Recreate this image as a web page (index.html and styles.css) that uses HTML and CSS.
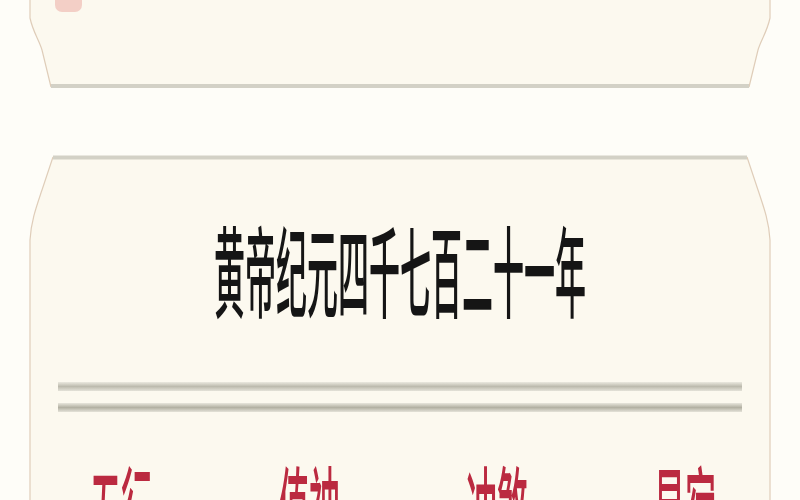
FILE: index.html
```html
<!DOCTYPE html>
<html lang="zh">
<head>
<meta charset="utf-8">
<title>黄历</title>
<link rel="stylesheet" href="styles.css">
</head>
<body>
<main class="page">
  <section class="card card-top">
    <svg class="card-bg" width="742" height="128" viewBox="0 0 742 128">
      <path class="fill" d="M1 0 L1 58 C4 72 10 80 13 90 L22 127 L720 127 L729 90 C732 80 738 72 741 58 L741 0 Z"/>
      <path class="side" d="M1 0 L1 58 C4 72 10 80 13 90 L22 127"/>
      <path class="side" d="M741 0 L741 58 C738 72 732 80 729 90 L720 127"/>
      <line class="edge" x1="22" y1="126" x2="720" y2="126"/>
    </svg>
    <div class="top-row">
      <span class="top-icon"></span>
      <span class="top-text">宜 祭祀 祈福 求嗣 开光 出行</span>
    </div>
  </section>

  <section class="card card-main">
    <svg class="card-bg" width="742" height="440" viewBox="0 0 742 440">
      <path class="fill" d="M24 2 L718 2 L729 35 C734 50 740 66 741 85 L741 440 L1 440 L1 85 C2 66 8 50 13 35 Z"/>
      <path class="side" d="M24 2 L13 35 C8 50 2 66 1 85 L1 440"/>
      <path class="side" d="M718 2 L729 35 C734 50 740 66 741 85 L741 440"/>
      <line class="edge" x1="24" y1="2.5" x2="718" y2="2.5"/>
    </svg>
    <h1 class="title"><span class="stretch">黄帝纪元四千七百二十一年</span></h1>
    <div class="rules"></div>
    <ul class="labels">
      <li><span class="stretch">五行</span></li>
      <li><span class="stretch">值神</span></li>
      <li><span class="stretch">冲煞</span></li>
      <li><span class="stretch">星宿</span></li>
    </ul>
  </section>
</main>
</body>
</html>
```
FILE: styles.css
```css
html, body {
  margin: 0;
  padding: 0;
  background: #fefdf8;
  overflow: hidden;
  height: 500px;
}
body {
  font-family: "Noto Sans CJK SC", "Noto Sans", sans-serif;
}
.page {
  display: flex;
  flex-direction: column;
  gap: 27px;
  padding-left: 29px;
}
.card {
  position: relative;
  width: 742px;
  box-sizing: border-box;
  flex-shrink: 0;
}
.card-bg {
  position: absolute;
  left: 0;
  top: 0;
  z-index: 0;
}
.card-bg .fill { fill: #fcf9ef; stroke: none; }
.card-bg .side { fill: none; stroke: #dfcdb9; stroke-width: 1.2; }
.card-bg .edge { stroke: #d3d1c6; stroke-width: 4; }

.card-top {
  height: 128px;
  margin-top: -40px;
}
.top-row {
  position: relative;
  display: flex;
  align-items: flex-end;
  gap: 16px;
  padding: 20px 0 0 26px;
  height: 32px;
}
.top-icon {
  width: 27px;
  height: 32px;
  border-radius: 4px 4px 7px 7px;
  background: #f3cfc6;
}
.top-text {
  font-size: 20px;
  line-height: 20px;
  color: #f3f0e7;
  letter-spacing: 8px;
  margin-bottom: 12px;
}

.card-main {
  height: 440px;
  margin-top: 40px;
  display: flex;
  flex-direction: column;
}
.card-main > * {
  flex-shrink: 0;
}
.title {
  position: relative;
  margin: 61px 0 0 0;
  height: 100px;
  display: flex;
  align-items: center;
  justify-content: center;
  font-size: 31px;
  font-weight: 500;
  line-height: 31px;
  color: #151515;
}
.stretch {
  display: inline-block;
  transform: scaleY(3.2);
  transform-origin: center;
}
.rules {
  position: relative;
  margin: 66px 29px 0 29px;
  height: 30px;
  background:
    linear-gradient(#ebe9df, #bdbbae 50%, #e4e2d8) top / 100% 9px no-repeat,
    linear-gradient(#e8e6dc, #b3b1a3 50%, #e4e2d8) bottom / 100% 9px no-repeat;
}
.labels {
  position: relative;
  list-style: none;
  margin: 44px 0 0 0;
  padding: 0 0 0 61px;
  display: grid;
  grid-template-columns: repeat(4, 188px);
  height: 100px;
  align-items: center;
}
.labels li {
  font-size: 31px;
  font-weight: 500;
  line-height: 31px;
  color: #bb2a40;
}
```
